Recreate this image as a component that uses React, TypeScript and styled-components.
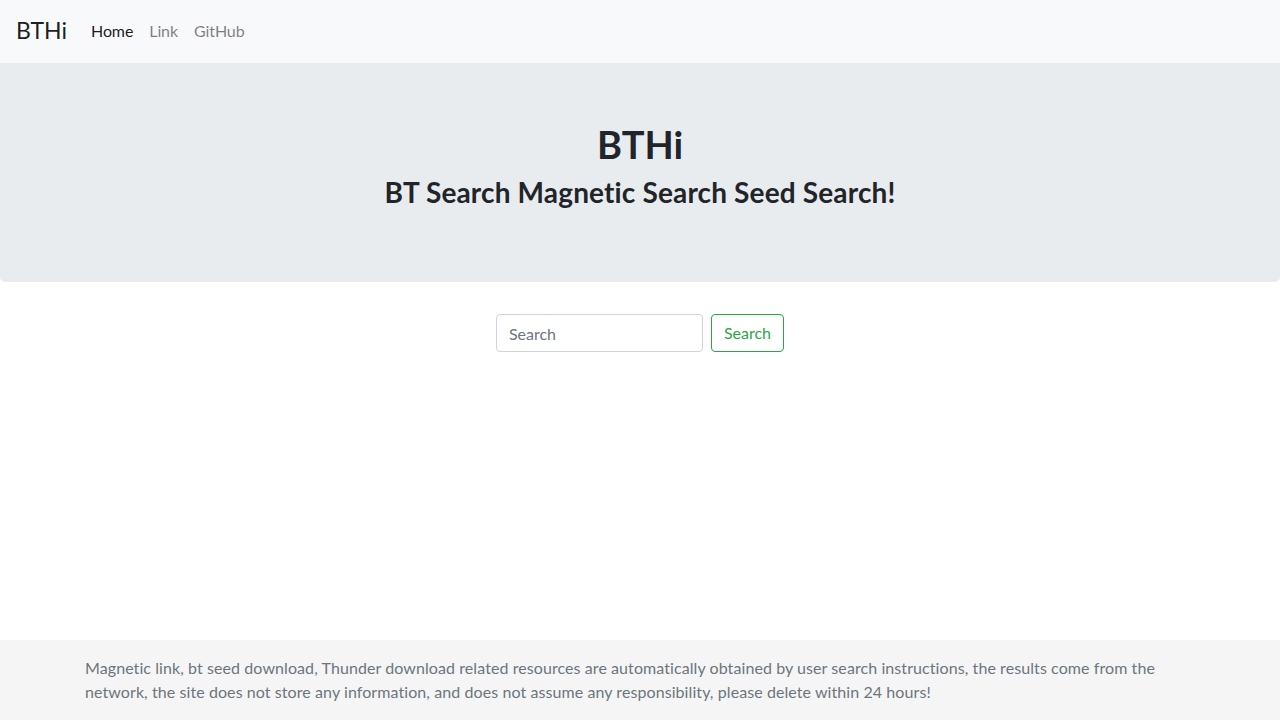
import React from "react";
import styled, { createGlobalStyle } from "styled-components";

const GlobalStyle = createGlobalStyle`
  * { box-sizing: border-box; }
  html, body { margin: 0; padding: 0; }
  body {
    font-family: "Lato", "Noto Sans", sans-serif;
    font-size: 16px;
    line-height: 1.5;
    color: #212529;
    background: #fff;
  }
`;

const Page = styled.div`
  display: flex;
  flex-direction: column;
  min-height: 100vh;
`;

const Navbar = styled.nav`
  display: flex;
  align-items: center;
  height: 63px;
  padding: 0 16px 2px;
  background: #f8f9fa;
`;

const Brand = styled.a`
  font-size: 23px;
  line-height: 1.5;
  color: rgba(0, 0, 0, 0.9);
  margin-right: 16px;
  text-decoration: none;
`;

const NavList = styled.div`
  display: flex;
`;

const NavLink = styled.a<{ $active?: boolean }>`
  padding: 8px;
  font-size: 16px;
  letter-spacing: -0.1px;
  color: ${(p) => (p.$active ? "rgba(0,0,0,0.9)" : "rgba(0,0,0,0.5)")};
  text-decoration: none;
`;

const Jumbotron = styled.header`
  background: #e9ecef;
  padding: 59px 32px 73px;
  border-radius: 0 0 5px 5px;
  text-align: center;
  margin-bottom: 32px;
`;

const Title = styled.h1`
  margin: 0 0 8px;
  font-size: 38px;
  line-height: 1.2;
  font-weight: 700;
`;

const Subtitle = styled.h3`
  margin: 0;
  font-size: 28px;
  line-height: 1.2;
  font-weight: 700;
  letter-spacing: 0.15px;
`;

const SearchForm = styled.form`
  display: flex;
  justify-content: center;
  gap: 8px;
`;

const Input = styled.input`
  width: 207px;
  height: 38px;
  padding: 6px 12px;
  font: inherit;
  font-size: 16px;
  color: #495057;
  border: 1px solid #ced4da;
  border-radius: 4px;
  outline: none;
  &::placeholder { color: #6c757d; }
`;

const Button = styled.button`
  height: 38px;
  padding: 6px 12px;
  font: inherit;
  font-size: 16px;
  color: #28a745;
  background: transparent;
  border: 1px solid #28a745;
  border-radius: 4px;
`;

const Footer = styled.footer`
  margin-top: auto;
  background: #f5f5f5;
  padding: 16px 0;
`;

const Container = styled.div`
  width: 1140px;
  margin: 0 auto;
  padding: 0 15px;
`;

const FooterText = styled.p`
  margin: 0;
  color: #6c757d;
  font-size: 16px;
  line-height: 24px;
  letter-spacing: 0.08px;
`;

export default function App() {
  return (
    <>
      <GlobalStyle />
      <Page>
        <Navbar>
          <Brand href="#">BTHi</Brand>
          <NavList>
            <NavLink $active href="#">Home</NavLink>
            <NavLink href="#">Link</NavLink>
            <NavLink href="#">GitHub</NavLink>
          </NavList>
        </Navbar>
        <Jumbotron>
          <Title>BTHi</Title>
          <Subtitle>BT Search Magnetic Search Seed Search!</Subtitle>
        </Jumbotron>
        <SearchForm onSubmit={(e) => e.preventDefault()}>
          <Input placeholder="Search" />
          <Button type="submit">Search</Button>
        </SearchForm>
        <Footer>
          <Container>
            <FooterText>
              Magnetic link, bt seed download, Thunder download related resources are automatically obtained by user search instructions, the results come from the network, the site does not store any information, and does not assume any responsibility, please delete within 24 hours!
            </FooterText>
          </Container>
        </Footer>
      </Page>
    </>
  );
}
